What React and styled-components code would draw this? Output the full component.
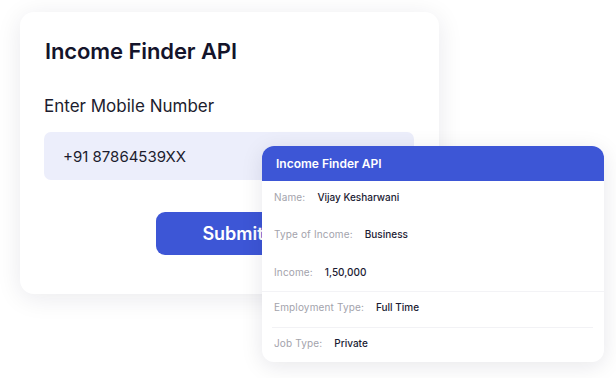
import React from "react";
import styled, { createGlobalStyle } from "styled-components";

const Global = createGlobalStyle`
  html, body { margin: 0; padding: 0; background: #ffffff; }
  body { font-family: Inter, "Noto Sans", sans-serif; -webkit-font-smoothing: antialiased; }
`;

const Stage = styled.div`
  position: relative;
  width: 616px;
  height: 378px;
  padding: 12px 0 0 20px;
  box-sizing: border-box;
  overflow: hidden;
`;

const FormCard = styled.div`
  width: 419px;
  height: 282px;
  box-sizing: border-box;
  background: #fff;
  border-radius: 14px;
  box-shadow: 0 4px 26px rgba(20, 20, 50, 0.09);
  padding: 26px 25px 0 24px;
  display: flex;
  flex-direction: column;
`;

const Title = styled.h1`
  margin: 0;
  font-size: 22px;
  line-height: 26px;
  font-weight: 600;
  color: #14142b;
  padding-left: 1px;
  letter-spacing: -0.1px;
`;

const Label = styled.div`
  margin-top: 31px;
  font-size: 17px;
  line-height: 22px;
  color: #1c1c2e;
`;

const InputBox = styled.div`
  margin-top: 15px;
  height: 48px;
  border-radius: 7px;
  background: #eceefb;
  display: flex;
  align-items: center;
  padding-left: 19px;
  font-size: 15px;
  color: #1c1c2e;
`;

const ButtonRow = styled.div`
  margin-top: 32px;
  padding-left: 112px;
  display: flex;
`;

const SubmitButton = styled.button`
  width: 154px;
  height: 43px;
  border: none;
  border-radius: 9px;
  background: #3d56d6;
  color: #fff;
  font-family: Inter, "Noto Sans", sans-serif;
  font-size: 18px;
  font-weight: 600;
  padding: 0;
`;

const ResultCard = styled.div`
  position: absolute;
  left: 262px;
  top: 146px;
  width: 342px;
  height: 216px;
  background: #fff;
  border-radius: 12px;
  overflow: hidden;
  box-shadow: 0 4px 22px rgba(20, 20, 50, 0.1);
  display: flex;
  flex-direction: column;
`;

const ResultHeader = styled.div`
  height: 35px;
  flex: none;
  background: #3d56d6;
  color: #fff;
  font-size: 12px;
  font-weight: 600;
  display: flex;
  align-items: center;
  padding-left: 14px;
`;

const Row = styled.div`
  height: 36.5px;
  flex: none;
  box-sizing: border-box;
  display: flex;
  align-items: center;
  padding: 0 12px ${(p) => p.$pb}px 12px;
  font-size: 10px;
  border-top: ${(p) => (p.$sep === "full" ? "1px solid #f3f3f6" : "none")};
  position: relative;
  &::before {
    content: "";
    display: ${(p) => (p.$sep === "inset" ? "block" : "none")};
    position: absolute;
    left: 10px;
    right: 11px;
    top: 0;
    height: 1px;
    background: #f2f2f5;
  }
`;

const RowLabel = styled.span`
  color: #a3a3ac;
  margin-right: 12px;
  letter-spacing: 0.15px;
`;

const RowValue = styled.span`
  color: #1b1b33;
  font-weight: 500;
`;

const rows = [
  { label: "Name:", value: "Vijay Kesharwani", pb: 4 },
  { label: "Type of Income:", value: "Business", pb: 4 },
  { label: "Income:", value: "1,50,000", pb: 0 },
  { label: "Employment Type:", value: "Full Time", sep: "full", pb: 4 },
  { label: "Job Type:", value: "Private", sep: "inset", pb: 4 },
];

export default function App() {
  return (
    <>
      <Global />
      <Stage>
        <FormCard>
          <Title>Income Finder API</Title>
          <Label>Enter Mobile Number</Label>
          <InputBox>+91 87864539XX</InputBox>
          <ButtonRow>
            <SubmitButton>Submit</SubmitButton>
          </ButtonRow>
        </FormCard>
        <ResultCard>
          <ResultHeader>Income Finder API</ResultHeader>
          {rows.map((r) => (
            <Row key={r.label} $sep={r.sep} $pb={r.pb}>
              <RowLabel>{r.label}</RowLabel>
              <RowValue>{r.value}</RowValue>
            </Row>
          ))}
        </ResultCard>
      </Stage>
    </>
  );
}
